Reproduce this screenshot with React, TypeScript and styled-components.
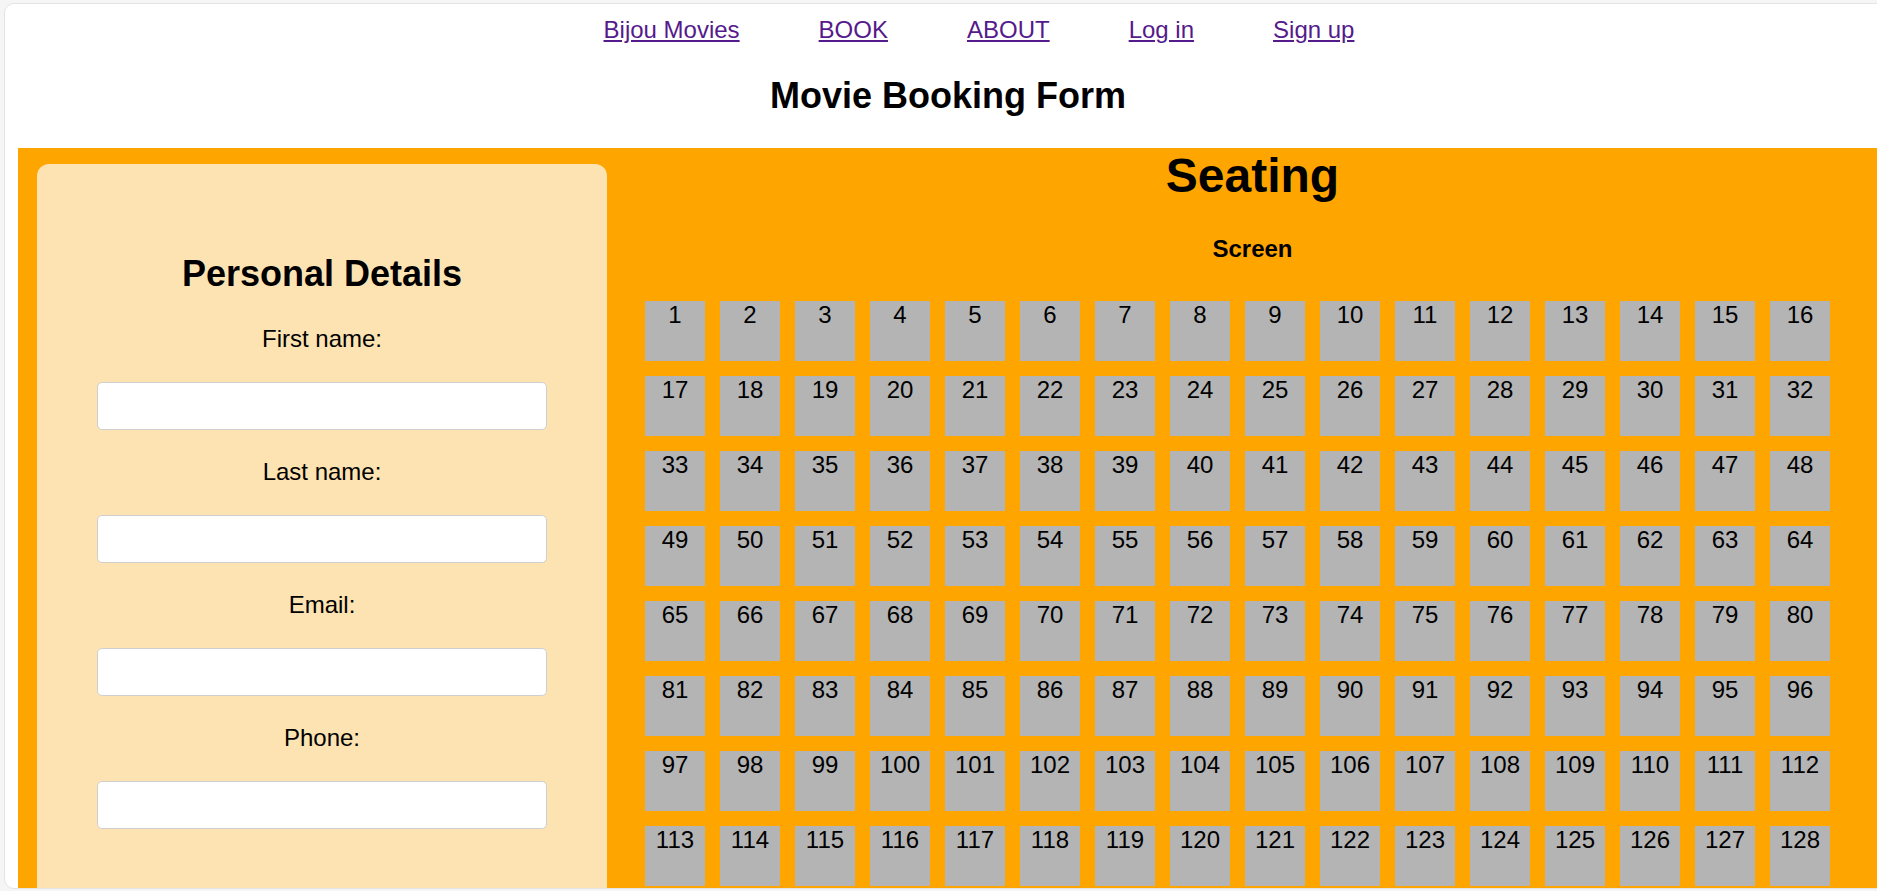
import React from "react";
import styled, { createGlobalStyle } from "styled-components";

const Global = createGlobalStyle`
  html, body {
    margin: 0;
    padding: 0;
    background: #f5f5f5;
    overflow: hidden;
    font-family: "Liberation Sans", Arial, sans-serif;
  }
  * { box-sizing: border-box; }
`;

const Frame = styled.div`
  margin: 3px 0 0 4px;
  width: 1900px;
  height: 886px;
  background: #ffffff;
  border: 1px solid #e4e4e4;
  border-radius: 10px;
  overflow: hidden;
`;

const Nav = styled.nav`
  display: flex;
  justify-content: center;
  gap: 79px;
  padding: 12px 0 0 62px;
  width: 1886px;
`;

const NavLink = styled.a`
  font-size: 24px;
  line-height: normal;
  color: #551a8b;
  text-decoration: underline;
`;

const Title = styled.h2`
  margin: 31px 0 0;
  width: 1886px;
  text-align: center;
  font-size: 36px;
  font-weight: bold;
  line-height: normal;
  color: #000;
`;

const Stage = styled.section`
  display: flex;
  align-items: flex-start;
  margin: 31px 0 0 13px;
  width: 1860px;
  height: 760px;
  background: #ffa500;
  padding-left: 19px;
`;

const Panel = styled.form`
  flex: 0 0 570px;
  margin-top: 16px;
  height: 760px;
  background: #fde3b2;
  border-radius: 12px;
  padding-top: 89px;
  display: flex;
  flex-direction: column;
  align-items: center;
`;

const PanelTitle = styled.h2`
  margin: 0 0 30px;
  font-size: 36px;
  font-weight: bold;
  line-height: normal;
  color: #000;
`;

const Fields = styled.div`
  display: flex;
  flex-direction: column;
  align-items: center;
  gap: 28.5px;
`;

const Label = styled.label`
  font-size: 24px;
  line-height: normal;
  color: #000;
`;

const Input = styled.input`
  width: 450px;
  height: 48px;
  background: #fff;
  border: 1px solid #cfcfcf;
  border-radius: 5px;
  font-family: inherit;
  font-size: 18px;
  padding: 0 10px;
  outline: none;
`;

const Seating = styled.div`
  flex: 1;
  margin-left: 20px;
  display: flex;
  flex-direction: column;
`;

const SeatingTitle = styled.h1`
  margin: 0;
  text-align: center;
  font-size: 48px;
  font-weight: bold;
  line-height: normal;
  color: #000;
`;

const ScreenLabel = styled.h3`
  margin: 32px 0 0;
  text-align: center;
  font-size: 24px;
  font-weight: bold;
  line-height: normal;
  color: #000;
`;

const SeatGrid = styled.div`
  display: grid;
  grid-template-columns: repeat(16, 60px);
  grid-auto-rows: 60px;
  gap: 15px;
  margin-top: 37.5px;
  padding-left: 18px;
`;

const Seat = styled.div`
  background: #b4b4b4;
  text-align: center;
  font-size: 24px;
  line-height: normal;
  color: #000;
`;

const links = ["Bijou Movies", "BOOK", "ABOUT", "Log in", "Sign up"];
const fields = ["First name:", "Last name:", "Email:", "Phone:"];

export default function App() {
  const seats = Array.from({ length: 128 }, (_, i) => i + 1);
  return (
    <>
      <Global />
      <Frame>
        <Nav>
          {links.map((l) => (
            <NavLink key={l} href="#">
              {l}
            </NavLink>
          ))}
        </Nav>
        <Title>Movie Booking Form</Title>
        <Stage>
          <Panel>
            <PanelTitle>Personal Details</PanelTitle>
            <Fields>
              {fields.map((f) => (
                <React.Fragment key={f}>
                  <Label>{f}</Label>
                  <Input type="text" />
                </React.Fragment>
              ))}
            </Fields>
          </Panel>
          <Seating>
            <SeatingTitle>Seating</SeatingTitle>
            <ScreenLabel>Screen</ScreenLabel>
            <SeatGrid>
              {seats.map((n) => (
                <Seat key={n}>{n}</Seat>
              ))}
            </SeatGrid>
          </Seating>
        </Stage>
      </Frame>
    </>
  );
}
